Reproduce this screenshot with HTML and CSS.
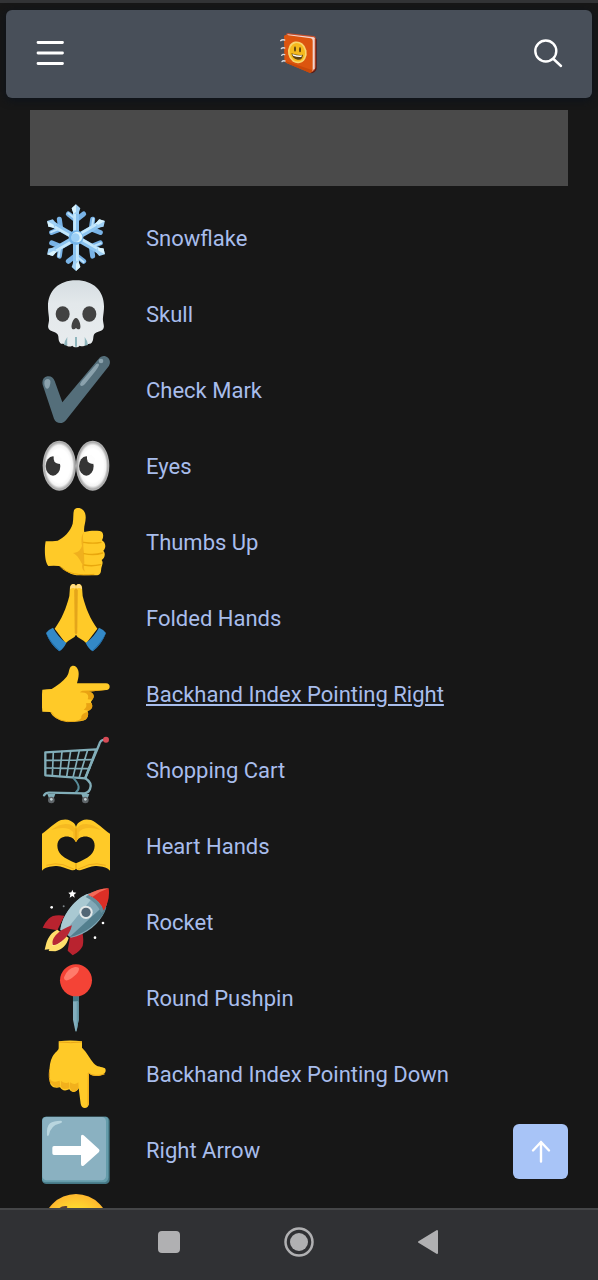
FILE: index.html
```html
<!DOCTYPE html>
<html lang="en">
<head>
  <meta charset="UTF-8" />
  <meta name="viewport" content="width=device-width, initial-scale=1.0"/>
  <title>Emoji List</title>
  <link rel="stylesheet" href="styles.css">
</head>
<body>
  <div class="status-bar"></div>

  <header class="header">
    <button class="icon-button" aria-label="Menu">
      <svg width="30" height="30" viewBox="0 0 30 30" fill="none" stroke="#fff" stroke-width="2.8" stroke-linecap="round">
        <path d="M3 3.500H27.500M3 14H27.500M3 24.500H27.500"/>
      </svg>
    </button>
    <a class="logo" href="#" aria-label="Home">
      <svg width="40" height="44" viewBox="25 18 120 132">
        <path d="M120 142q14-2 18-14V40l-10-8z" fill="#5b1c16"/>
        <path d="M46 24q2-3 8-2l76 8q5 1 5 6v88q-1 10-10 14z" fill="#c8502c"/>
        <path d="M50 25l80 9 2 3v90l-10 12z" fill="#f1d5cf"/>
        <path d="M40 31q1-5 8-4l72 10q6 1 6 7v88q-1 10-9 8l-68-28q-8-3-8-10z" fill="#dc550f"/>
        <path d="M45 106l79 26q-1 9-7 8l-68-28z" fill="#c9490a"/>
        <ellipse cx="80" cy="79" rx="28" ry="33" fill="#f7d56d" transform="rotate(-12 80 79)"/>
        <ellipse cx="80" cy="79" rx="23" ry="28" fill="#f5b91d" transform="rotate(-12 80 79)"/>
        <ellipse cx="73" cy="69" rx="3" ry="8" fill="#60420e"/>
        <ellipse cx="88" cy="71" rx="3" ry="8" fill="#60420e"/>
        <path d="M62 82q18 7 35 4-2 18-16 15-15-2-19-19z" fill="#60420e"/>
        <path d="M65 84q16 6 29 4l-2 5q-13 1-25-4z" fill="#fff"/>
        <path d="M42 42q-8-2-12 2M42 66q-7-2-10 2M42 86q-6-2-9 2M43 105q-6-2-9 2" fill="none" stroke="#d5d8df" stroke-width="4" stroke-linecap="round"/>
      </svg>
    </a>
    <button class="icon-button" aria-label="Search">
      <svg width="30" height="30" viewBox="0 0 30 30" fill="none" stroke="#fff" stroke-width="2.400" stroke-linecap="round">
        <circle cx="12.800" cy="12" r="10.500"/><path d="M20.500 20L28 27"/>
      </svg>
    </button>
  </header>

  <main class="content">
    <div class="ad"></div>

    <ul class="emoji-list">
      <li>
        <a href="#">
          <svg class="emoji" viewBox="21 25 204 204">
            <defs>
              <g id="arm" fill="none" stroke-linecap="round">
                <path d="M123 73L100 55M123 73l23-18" stroke="#79b3e6" stroke-width="15"/>
                <path d="M123 122V46" stroke="#8cc4f0" stroke-width="18" stroke-linecap="butt"/>
                <path d="M119 122V46" stroke="#c5e8fb" stroke-width="8" stroke-linecap="butt"/>
                <path d="M119 68L100 53" stroke="#bfe3fa" stroke-width="6"/>
                <path d="M123 26l13 12-6 17h-14l-6-17z" fill="#9fd0f5"/>
                <path d="M123 26v22l-7 7-6-17z" fill="#d9f3fd"/>
              </g>
            </defs>
            <use href="#arm"/>
            <use href="#arm" transform="rotate(60 123 126)"/>
            <use href="#arm" transform="rotate(120 123 126)"/>
            <use href="#arm" transform="rotate(180 123 126)"/>
            <use href="#arm" transform="rotate(240 123 126)"/>
            <use href="#arm" transform="rotate(300 123 126)"/>
            <circle cx="123" cy="126" r="22" fill="#75b5e9"/>
            <circle cx="126" cy="124" r="16" fill="#d8f2fc"/>
            <circle cx="121" cy="126" r="13" fill="#9bcff5"/>
          </svg>
          <span>Snowflake</span>
        </a>
      </li>
      <li>
        <a href="#">
          <svg class="emoji" viewBox="21 252 204 204">
            <defs><linearGradient id="bone" x1="0" y1="0" x2="0" y2="1"><stop offset="0" stop-color="#d5dde1"/><stop offset=".35" stop-color="#e3e8eb"/><stop offset="1" stop-color="#e8ecee"/></linearGradient></defs>
            <path d="M123 253c52 0 84 32 84 78 0 20-4 32-3 43 1 10 5 17 1 24-5 9-21 8-27 16-5 8-1 17-8 26-5 6-13 1-19 7-5 6-13 4-17 2-5 6-17 6-22 0-6 4-14 4-18-2-6-6-14 0-19-7-7-9-2-18-8-26-6-8-21-7-26-16-4-7 0-14 1-24 1-11-3-23-3-43 0-46 32-78 84-78z" fill="url(#bone)"/>
            <ellipse cx="83" cy="354" rx="21" ry="23" fill="#424242"/>
            <ellipse cx="163" cy="354" rx="21" ry="23" fill="#424242"/>
            <path d="M123 366c9 0 15 22 13 29-2 8-9 5-13 1-4 4-11 7-13-1-2-7 4-29 13-29z" fill="#424242"/>
            <path d="M87 447q2-14 10-24-1 12 0 26zM120 451v-28h6v28q-3 4-6 0zM149 449q1-14 0-26 8 10 10 24z" fill="#8fb6bd"/>
          </svg>
          <span>Skull</span>
        </a>
      </li>
      <li>
        <a href="#">
          <svg class="emoji" viewBox="21 17 204 204">
            <path d="M23 103c-3-13 3-23 14-25 10-2 18 3 22 14l23 64L190 27c9-12 20-12 29-5 8 8 7 19 1 27L94 208c-10 14-30 14-37-3z" fill="#546e7a"/>
            <path d="M184 41q9-5 8 4-4 10-11 18l-31 38q-9 9-14 4-2-4 4-12z" fill="#8ba2ad"/>
            <circle cx="198" cy="32" r="7" fill="#8ba2ad"/>
            <path d="M39 86q9 1 7 13-3 18-10 16-6-2-8-15-1-14 11-14z" fill="#8ba2ad"/>
          </svg>
          <span>Check Mark</span>
        </a>
      </li>
      <li>
        <a href="#">
          <svg class="emoji" viewBox="21 244 204 204">
            <defs>
              <radialGradient id="eyeball"><stop offset=".7" stop-color="#fff"/><stop offset=".86" stop-color="#f4f4f4"/><stop offset="1" stop-color="#a4a4a4"/></radialGradient>
              <g id="eye">
                <ellipse cx="73" cy="345" rx="50" ry="75" fill="#b0b0b0"/>
                <ellipse cx="73" cy="345" rx="46" ry="71" fill="url(#eyeball)"/>
                <ellipse cx="54" cy="346" rx="22" ry="29" fill="#353535"/>
                <path d="M56 314q-1 12 2 18 5 8 18 8l4-16-12-12z" fill="#fdfdfd"/>
              </g>
            </defs>
            <use href="#eye"/>
            <use href="#eye" x="100"/>
          </svg>
          <span>Eyes</span>
        </a>
      </li>
      <li>
        <a href="#">
          <svg class="emoji" viewBox="21 24 204 204">
            <path d="M32 124q23 0 36-2c17-8 39-28 45-51 3-16 1-31 4-40 5-11 27-9 33 8 7 21-6 39-2 57 14-4 32-4 46-3 12 2 13 16 7 28 13 8 12 24 4 31 8 9 4 24-5 28 7 10-1 15-2 32-1 11-7 14-19 14h-45c-26 0-39-10-55-25q-7-5-39-3c-12-14-12-55-8-74z" fill="#ffca28"/>
            <path d="M148 96c-6 7-4 22-2 31-2 7-1 13 1 32l1 30q-3 18 2 26l6 4c-15-6-16-18-14-26-6-10-14-28-28-34 16-2 22-8 27-22-3-18-2-33 7-41z" fill="#f0b01e"/>
            <path d="M146 127q30 5 52 0M147 161q31 6 56-2M147 195q24 5 50-1" fill="none" stroke="#e9a70d" stroke-width="4" stroke-linecap="round"/>
            <path d="M75 199c20 23 59 28 103 24" fill="none" stroke="#e9a70d" stroke-width="3"/>
          </svg>
          <span>Thumbs Up</span>
        </a>
      </li>
      <li>
        <a href="#">
          <svg class="emoji" viewBox="21 252 204 204">
            <defs>
              <g id="palm">
                <path d="M59 386C80 358 94 324 103 288l2-27q2-10 11-9 6 1 7 6v146q-3 8-13 12-10 5-18 14z" fill="#ffca28"/>
                <path d="M117 270l6-4v138l-4-6z" fill="#ebac1d"/>
                <path d="M105 268q1-16 11-16 8 2 6 15-8-6-17 1z" fill="#ffdc86"/>
                <path d="M33 399q8-11 21-16 15 28 40 46-9 18-21 25-24-17-40-55z" fill="#3389c8"/>
                <path d="M33 399q18 33 42 53l-3 1q-28-22-39-54z" fill="#216ba4"/>
              </g>
            </defs>
            <use href="#palm"/>
            <use href="#palm" transform="matrix(-1 0 0 1 246 0)"/>
            <path d="M123 264v138" stroke="#d79a18" stroke-width="2"/>
          </svg>
          <span>Folded Hands</span>
        </a>
      </li>
      <li>
        <a class="active" href="#">
          <svg class="emoji" viewBox="21 16 204 204">
            <path d="M23 105q13-2 27-2c17-12 35-23 45-37 8-10 5-18 11-28 7-10 21-3 24 10 3 14-1 26-4 38h87q11 1 11 10t-10 10l-56 5c17 0 22 13 15 22-2 5-5 7-5 10 8 11 2 24-10 26 4 13-1 28-16 29-22 5-60 6-84-11q-8-6-12-15l-24-1q-3-33 0-66z" fill="#ffca28"/>
            <path d="M217 105l-57 6c15 0 21 14 12 24l-14-1c4-9 1-17-9-20l-15-1 8-5zM169 145c7 12 1 20-9 23l-14-3c8-5 10-12 7-19zM159 172c3 16-5 26-28 27l-21 2c17-2 31-6 29-16 2-6 10-12 20-13z" fill="#e9a313"/>
            <path d="M48 172q21 35 72 28" fill="none" stroke="#eba915" stroke-width="3"/>
          </svg>
          <span>Backhand Index Pointing Right</span>
        </a>
      </li>
      <li>
        <a href="#">
          <svg class="emoji" viewBox="21 243 204 204">
            <g fill="none" stroke="#82aeb9" stroke-linejoin="round" stroke-linecap="round">
              <path d="M31 292L184 283 151 370 31 361z" stroke-width="7"/>
              <path d="M55 291l-3 71M81 289l-7 75M107 288l-12 77M133 287l-19 80M158 285l-26 84M31 316l143-2M31 339l133 2" stroke-width="5"/>
              <path d="M209 254q-13 0-17 16l-41 98" stroke-width="7"/>
              <path d="M116 370q26 28 7 41" stroke="#588c99" stroke-width="6"/>
              <path d="M151 370q22 14 14 32-5 12-17 13l-106-2q-10 0-15 8" stroke-width="7"/>
            </g>
            <path d="M37 417h24l-6 16H43zM139 417h24l-6 16h-12z" fill="#82aeb9"/>
            <circle cx="49" cy="435" r="10" fill="#5f6569"/><circle cx="49" cy="433" r="4" fill="#c2d1d5"/>
            <circle cx="151" cy="435" r="10" fill="#5f6569"/><circle cx="151" cy="433" r="4" fill="#c2d1d5"/>
            <circle cx="213" cy="254" r="9" fill="#d84b56"/>
          </svg>
          <span>Shopping Cart</span>
        </a>
      </li>
      <li>
        <a href="#">
          <svg class="emoji" viewBox="21 7 204 204">
            <defs>
              <g id="heart-hand">
                <path d="M21 72C41 60 60 37 78 31q17-4 28 2 14 6 17 19v46c-7-18-31-23-46-12-15 12-12 37 2 50 11 11 28 17 44 25v16q-5 7-15 4c-18-5-31-14-47-12-18 2-33 3-42 17z" fill="#ffca28"/>
                <path d="M48 61Q78 38 103 44q15 5 20 17v35q-10-10-8-28-17-22-67-7z" fill="#f6b921"/>
                <path d="M34 167q27-8 50-2 19 8 34 14" fill="none" stroke="#efad1b" stroke-width="3"/>
              </g>
            </defs>
            <use href="#heart-hand"/>
            <use href="#heart-hand" transform="matrix(-1 0 0 1 246 0)"/>
            <path d="M123 53v43M123 161v17" stroke="#e5a00d" stroke-width="3"/>
          </svg>
          <span>Heart Hands</span>
        </a>
      </li>
      <li>
        <a href="#">
          <svg class="emoji" viewBox="21 236 204 204">
            <path d="M88 319q-33-5-47 9-13 13-18 27l44 8zM142 369q5 24 1 41-9 18-30 28l-15-14 8-47z" fill="#b9232f"/>
            <path d="M67 361c-16 6-28 23-33 40l-5 20 14-1-2 5 20 1c20-5 34-18 40-40z" fill="#ffdf6b"/>
            <path d="M76 369q-20 10-25 40 28-3 38-24z" fill="#fff1a6"/>
            <path d="M76 362C81 315 124 264 160 253q14-8 40-5l16 15q2 22-7 44c-15 34-54 69-101 78z" fill="#83a9b8"/>
            <path d="M76 362C81 315 124 264 160 253l12 13-83 101z" fill="#a9c9d2"/>
            <path d="M202 293l-99 91q59-13 100-66 8-11 11-25z" fill="#537f8e"/>
            <path d="M159 257q29-20 62-20 5 36-15 67-10-30-47-47z" fill="#dc2f26"/>
            <path d="M159 257q29-20 62-20-27 9-48 25z" fill="#f36a58"/>
            <path d="M159 257q36 15 47 47l-7 8q-11-32-47-49z" fill="#658d9b"/>
            <circle cx="153" cy="309" r="20" fill="#e2e8e9"/><circle cx="153" cy="309" r="14" fill="#526675"/>
            <path d="M111 348q-34 12-49 30-13 16-9 28 9 4 27-10 24-18 31-48z" fill="#b82834"/>
            <path d="M112 241l3 8 9 1-7 6 2 9-7-5-8 5 2-9-6-6 9-1z" fill="#fff"/>
            <circle cx="50" cy="294" r="4" fill="#fff"/><circle cx="86" cy="291" r="3" fill="#7d8589"/><circle cx="204" cy="341" r="4" fill="#fff"/><circle cx="180" cy="385" r="4" fill="#fff"/>
          </svg>
          <span>Rocket</span>
        </a>
      </li>
      <li>
        <a href="#">
          <svg class="emoji" viewBox="21 13 204 204">
            <path d="M114 102h17v78l-6 34q-2 3-4 0l-7-34z" fill="#82aebd"/>
            <path d="M114 105h17v20h-17z" fill="#457886"/>
            <path d="M125 126h6v54l-6 34z" fill="#679baa"/>
            <circle cx="123" cy="62" r="48" fill="#f44336"/>
            <path d="M87 53q9-26 33-31 13-1 12 7-1 11-15 21-15 14-25 12-6-2-5-9z" fill="#ff7b6b"/>
          </svg>
          <span>Round Pushpin</span>
        </a>
      </li>
      <li>
        <a href="#">
          <svg class="emoji" viewBox="21 240 204 204">
            <path d="M71 244q34-5 70 0v19c15 14 24 34 35 47 10 12 24 10 34 15 8 13-9 24-26 23-11 0-18-3-23-8l1 91c-2 17-23 17-25 0l-6-46c-8 15-21 14-28 3-12 6-23 4-28-6-21 5-31-5-31-21-1-21-3-51 9-72 8-14 18-17 18-25z" fill="#ffca28"/>
            <path d="M45 358c11 12 18 6 29 4l2 17c-15 8-27-2-31-21zM78 363q13 10 24 4l1 17q-20 8-25-4zM105 367q14 10 25 0l1 16q-5 12-18 12-11-5-8-28zM158 339l-1 99 5-5V341z" fill="#f2b11c"/>
            <path d="M72 246q34 4 69 0M44 328q-4 29 4 42M160 339q20 13 49 3" fill="none" stroke="#e9a619" stroke-width="3"/>
          </svg>
          <span>Backhand Index Pointing Down</span>
        </a>
      </li>
      <li>
        <a href="#">
          <svg class="emoji" viewBox="21 18 204 204">
            <rect x="21" y="20" width="203" height="202" rx="13" fill="#457784"/>
            <path d="M34 20h180q6 3 6 10v173q-2 14-16 14H29q-7-3-8-8V33q0-13 13-13z" fill="#659caa"/>
            <rect x="22" y="21" width="191" height="190" rx="13" fill="#8ab1c1"/>
            <path d="M36 75q-2-25 9-35 10-8 33-8 9 5-6 9-24 5-30 33-4 7-6 1z" fill="#b9d6df"/>
            <path d="M57 108h81V80q0-9 8-4l46 42q3 4 0 8l-46 41q-8 4-8-5v-27H57q-5 0-5-5v-17q0-5 5-5z" fill="#fff"/>
          </svg>
          <span>Right Arrow</span>
        </a>
      </li>
      <li>
        <a href="#">
          <svg class="emoji" viewBox="21 248 204 204">
            <defs><radialGradient id="face"><stop offset=".5" stop-color="#ffdf30"/><stop offset="1" stop-color="#ffb82e"/></radialGradient></defs>
            <circle cx="123" cy="353" r="99" fill="url(#face)"/>
            <path d="M74 300q6-8 20-7" fill="none" stroke="#5d4037" stroke-width="6" stroke-linecap="round"/>
          </svg>
        </a>
      </li>
    </ul>

    <button class="back-to-top" aria-label="Back to top">
      <svg width="24" height="24" viewBox="0 0 24 24" fill="none" stroke="#fff" stroke-width="2.400" stroke-linecap="round" stroke-linejoin="round">
        <path d="M12 21.500V2M4 10.500L12 2l8 8.500"/>
      </svg>
    </button>
  </main>

  <nav class="system-nav">
    <button aria-label="Recent apps">
      <svg width="30" height="30" viewBox="0 0 30 30"><rect x="4" y="4" width="22" height="22" rx="4" fill="#b0b0b2"/></svg>
    </button>
    <button aria-label="Home screen">
      <svg width="30" height="30" viewBox="0 0 30 30"><circle cx="15" cy="15" r="13.500" fill="none" stroke="#b0b0b2" stroke-width="2.500"/><circle cx="15" cy="15" r="9" fill="#b0b0b2"/></svg>
    </button>
    <button aria-label="Back">
      <svg width="30" height="30" viewBox="0 0 30 30"><path d="M5 15L23 4v22z" fill="#b0b0b2" stroke="#b0b0b2" stroke-width="2" stroke-linejoin="round"/></svg>
    </button>
  </nav>
</body>
</html>
```
FILE: styles.css
```css
* {
  box-sizing: border-box;
}

body {
  margin: 0;
  height: 100vh;
  display: flex;
  flex-direction: column;
  background: #171717;
  color: #a8bdec;
  font-family: Roboto, sans-serif;
  font-size: 22px;
  overflow: hidden;
}

button {
  display: flex;
  align-items: center;
  justify-content: center;
  padding: 0;
  border: none;
  background: none;
  cursor: pointer;
}

svg {
  display: block;
  flex-shrink: 0;
}

.status-bar {
  flex: none;
  height: 3px;
  background: #323335;
}

.header {
  flex: none;
  display: flex;
  align-items: center;
  justify-content: space-between;
  height: 88px;
  margin: 7px 6px 0;
  padding: 0 29px;
  background: #484f59;
  border-radius: 6px;
  box-shadow: 0 2px 8px #0d131c;
}

.content {
  position: relative;
  flex: 1;
  min-height: 0;
  padding: 12px 30px 0;
  overflow: hidden;
}

.ad {
  height: 76px;
  background: #4a4a4a;
}

.emoji-list {
  list-style: none;
  margin: 14px 0 0;
  padding: 0;
}

.emoji-list a {
  display: flex;
  align-items: center;
  gap: 36px;
  height: 76px;
  padding-left: 12px;
  color: inherit;
  text-decoration: none;
}

.emoji-list a.active,
.emoji-list a:hover {
  text-decoration: underline;
}

.emoji {
  width: 68px;
  height: 68px;
}

.back-to-top {
  position: absolute;
  right: 30px;
  bottom: 29px;
  width: 55px;
  height: 55px;
  background: #a8c4f7;
  border-radius: 6px;
}

.system-nav {
  flex: none;
  display: flex;
  align-items: center;
  justify-content: center;
  gap: 100px;
  height: 72px;
  padding-bottom: 6px;
  background: #303134;
  border-top: 2px solid #454648;
}
```
